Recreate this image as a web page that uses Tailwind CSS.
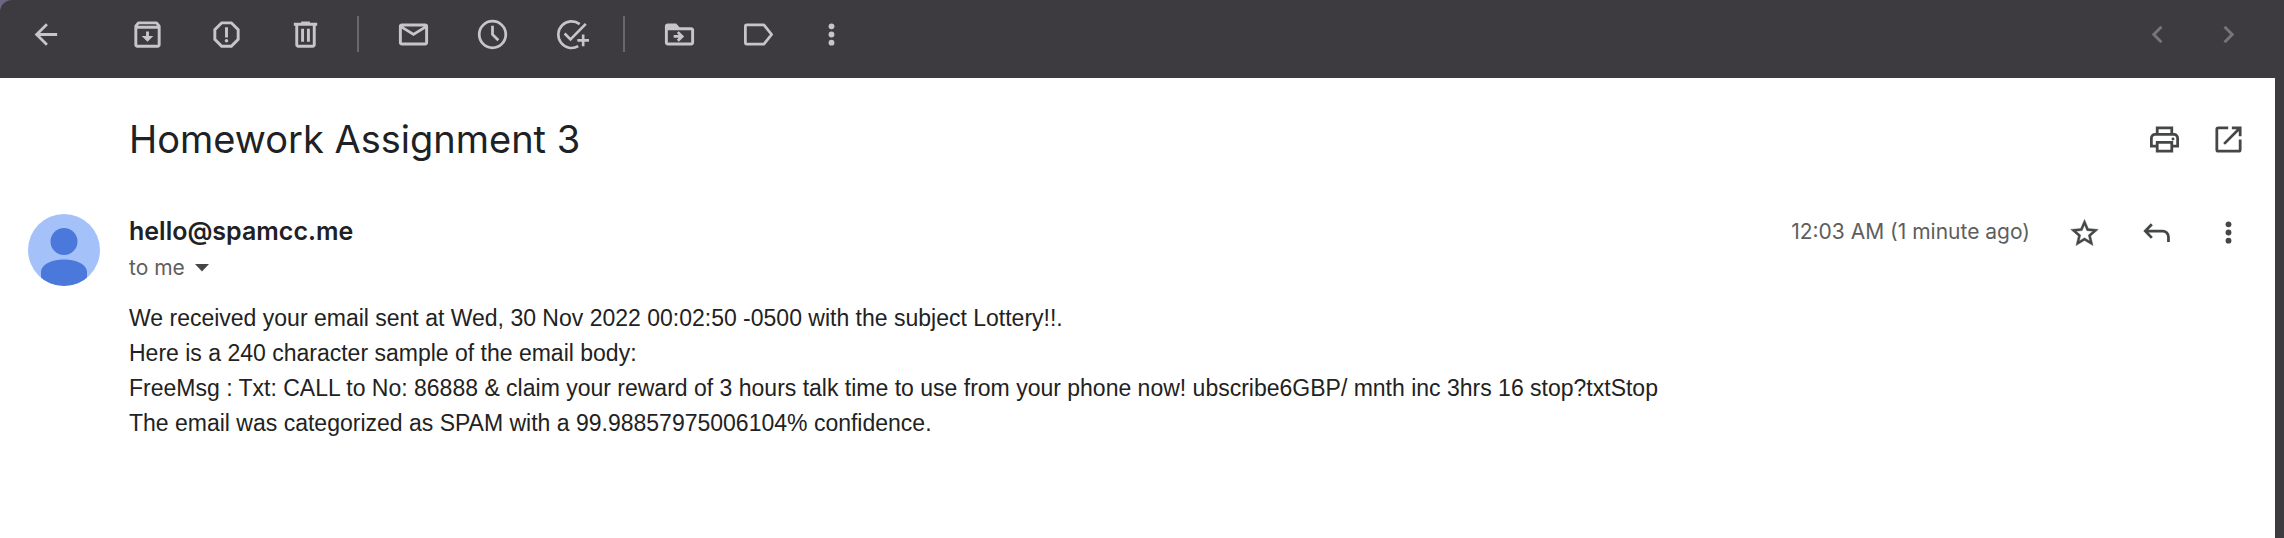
<!DOCTYPE html>
<html lang="en">
<head>
<meta charset="utf-8">
<title>Homework Assignment 3</title>
<script src="https://cdn.jsdelivr.net/npm/@tailwindcss/browser@4"></script>
</head>
<body class="bg-[#6a6784]">
<div class="flex min-h-screen flex-col rounded-tl-xl bg-[#3d3b40] font-['Inter',sans-serif]">
  <header class="flex h-[78px] items-start justify-between pt-[10px] pr-8 pl-[22px] text-[#c6c5c7]">
    <div class="flex items-center">
      <button aria-label="Back" class="mr-[53px] grid size-12 place-items-center"><svg class="size-[35px]" viewBox="0 0 24 24" fill="none" stroke="currentColor" stroke-width="1.9"><path d="M19.3 12H6M12.300 4.900 5.200 12l7.100 7.100"/></svg></button>
      <div class="flex gap-[31px]">
        <button aria-label="Archive" class="grid size-12 place-items-center"><svg class="size-[35px]" viewBox="0 0 24 24" fill="currentColor"><path d="M20.54 5.23l-1.39-1.68C18.88 3.21 18.47 3 18 3H6c-.47 0-.88.21-1.16.55L3.46 5.23C3.17 5.57 3 6.02 3 6.5V19c0 1.1.9 2 2 2h14c1.1 0 2-.9 2-2V6.500c0-.48-.17-.93-.46-1.27zM6.240 5h11.520l.83 1H5.420l.82-1zM5 19V8h14v11H5zm8-9h-2v3H8l4 4 4-4h-3z"/></svg></button>
        <button aria-label="Report spam" class="grid size-12 place-items-center"><svg class="size-[35px]" viewBox="0 0 24 24" fill="currentColor"><path d="M15.730 3H8.270L3 8.270v7.460L8.270 21h7.460L21 15.730V8.270L15.730 3zM19 14.900L14.900 19H9.100L5 14.900V9.100L9.100 5h5.800L19 9.100v5.800zM11 7h2v7h-2z"/><circle cx="12" cy="16.300" r="1.200"/></svg></button>
        <button aria-label="Delete" class="grid size-12 place-items-center"><svg class="size-[35px]" viewBox="0 0 24 24" fill="currentColor"><path d="M15 4V3H9v1H4v2h1v13c0 1.100.9 2 2 2h10c1.100 0 2-.9 2-2V6h1V4h-5zm2 15H7V6h10v13zM9 8h2v9H9zm4 0h2v9h-2z"/></svg></button>
      </div>
      <div class="mr-[30px] ml-7 h-9 w-[2px] bg-[#69676c]"></div>
      <div class="flex gap-[31px]">
        <button aria-label="Mark as unread" class="grid size-12 place-items-center"><svg class="size-[35px]" viewBox="0 0 24 24" fill="currentColor"><path d="M20 4.500H4c-1.100 0-2 .7-2 1.800v11.400c0 1.100.9 1.800 2 1.800h16c1.100 0 2-.7 2-1.800V6.300c0-1.100-.9-1.800-2-1.800zM19 6.500l-7 4.300-7-4.300h14zM4 17.500V8l8 5 8-5v9.500H4z"/></svg></button>
        <button aria-label="Snooze" class="grid size-12 place-items-center"><svg class="size-[35px]" viewBox="0 0 24 24" fill="none" stroke="currentColor" stroke-width="1.900"><circle cx="12" cy="12" r="9.100"/><path d="M12 6v6l4 3.900"/></svg></button>
        <button aria-label="Add to tasks" class="grid size-12 place-items-center"><svg class="size-[35px] overflow-visible" viewBox="0 0 24 24" fill="none" stroke="currentColor" stroke-width="1.800"><path d="M17.600 4.900A9.100 9.100 0 1 0 16.600 20M7.300 11.300l4 4L21.800 4.700M20 12v8M16 16h8"/></svg></button>
      </div>
      <div class="mr-[30px] ml-7 h-9 w-[2px] bg-[#69676c]"></div>
      <div class="flex gap-[31px]">
        <button aria-label="Move to" class="grid size-12 place-items-center"><svg class="size-[35px]" viewBox="0 0 24 24" fill="currentColor"><path d="M20 7h-8l-2.300-2.500H4c-1.100 0-2 .7-2 1.800v11.400c0 1.100.9 1.800 2 1.800h16c1.100 0 2-.7 2-1.800V8.800C22 7.700 21.100 7 20 7zm0 10.500H4V9h16v8.500z"/><path d="M8 12.300h3.400L10.200 11l1.300-1.300 3.700 3.600-3.700 3.600-1.300-1.300 1.200-1.300H8z"/></svg></button>
        <button aria-label="Labels" class="grid size-12 place-items-center"><svg class="size-[35px]" viewBox="0 0 24 24" fill="none" stroke="currentColor" stroke-width="1.900" stroke-linejoin="round"><path d="M4 5.450h11.700L21 12l-5.300 6.550H4a1 1 0 0 1-1-1V6.450a1 1 0 0 1 1-1z"/></svg></button>
      </div>
      <button aria-label="More" class="ml-[25px] grid size-12 place-items-center"><svg class="size-[35px]" viewBox="0 0 24 24" fill="currentColor"><circle cx="12" cy="6.400" r="2"/><circle cx="12" cy="12" r="2"/><circle cx="12" cy="17.600" r="2"/></svg></button>
    </div>
    <nav aria-label="Messages" class="flex gap-[23px] text-[#777579]">
      <button aria-label="Newer" class="grid size-12 place-items-center"><svg class="size-[35px]" viewBox="0 0 24 24" fill="currentColor"><path d="M15.410 7.410 14 6l-6 6 6 6 1.410-1.410L10.830 12z"/></svg></button>
      <button aria-label="Older" class="grid size-12 place-items-center"><svg class="size-[35px]" viewBox="0 0 24 24" fill="currentColor"><path d="M8.590 16.590 10 18l6-6-6-6-1.410 1.410L13.170 12z"/></svg></button>
    </nav>
  </header>

  <main class="mr-[9px] flex-1 bg-white pt-[29px] pr-[23px] pl-7 text-[#202124]">
    <div class="flex h-16 items-center justify-between pl-[101px]">
      <h1 class="text-[38px]">Homework Assignment 3</h1>
      <div class="flex gap-4 text-[#444746]">
        <button aria-label="Print" class="grid size-12 place-items-center"><svg class="size-[35px]" viewBox="0 0 24 24" fill="none" stroke="currentColor" stroke-width="1.900"><path d="M7 8.500V4h10v4.500M7 16.500H3V11a2.500 2.500 0 0 1 2.500-2.500h13A2.500 2.500 0 0 1 21 11v5.500h-4M7 13.900h10V20H7z"/><circle cx="17.800" cy="11.600" r="1" fill="currentColor" stroke="none"/></svg></button>
        <button aria-label="Open in new window" class="grid size-12 place-items-center"><svg class="size-[35px]" viewBox="0 0 24 24" fill="none" stroke="currentColor" stroke-width="1.900"><path d="M11.800 4H5a1 1 0 0 0-1 1v14a1 1 0 0 0 1 1h14a1 1 0 0 0 1-1v-7M14.300 4H20v5.700M19.500 4.500 9 15"/></svg></button>
      </div>
    </div>

    <article class="mt-[43px] flex gap-[29px]">
      <svg class="size-[72px] shrink-0" viewBox="0 0 72 72" role="img" aria-label="Sender picture"><defs><clipPath id="disc"><circle cx="36" cy="36" r="36"/></clipPath></defs><g clip-path="url(#disc)"><path fill="#a4c2f9" d="M0 0h72v72H0z"/><circle cx="36" cy="27.500" r="13.500" fill="#4b78db"/><path fill="#4b78db" d="M13 72V58c0-8 12-12.500 23-12.500S59 50 59 58v14z"/></g></svg>
      <div class="min-w-0 flex-1">
        <div class="flex items-start justify-between">
          <div>
            <h2 class="text-[25px] leading-[35px] font-semibold">hello@spamcc.me</h2>
            <button class="flex h-[37px] items-center gap-[10px] text-[21px] text-[#5e5e5e]">to me<svg class="h-2 w-[14px]" viewBox="0 0 14 8" fill="#444746"><path d="M0 0h14L7 7.500z"/></svg></button>
          </div>
          <div class="flex h-9 items-center gap-6 text-[#444746]">
            <time class="mr-[6px] text-[21px] text-[#5e5e5e]">12:03 AM (1 minute ago)</time>
            <button aria-label="Star" class="grid size-12 place-items-center"><svg class="size-[33px]" viewBox="0 0 24 24" fill="currentColor" stroke="currentColor" stroke-width="0.300"><path d="M22 9.740l-7.190-.62L12 2.500 9.190 9.130 2 9.740l5.460 4.730-1.640 7.030L12 17.770l6.180 3.730-1.630-7.030L22 9.740zM12 15.900l-3.760 2.270 1-4.280-3.320-2.880 4.380-.38L12 6.600l1.710 4.040 4.380.38-3.320 2.880 1 4.280L12 15.900z"/></svg></button>
            <button aria-label="Reply" class="grid size-12 place-items-center"><svg class="size-[35px]" viewBox="0 0 24 24" fill="none" stroke="currentColor" stroke-width="1.900"><path d="M8.800 6.300 4.300 11l4.500 4.700M4.500 11h11.700a4 4 0 0 1 4 4v3.500"/></svg></button>
            <button aria-label="More message options" class="grid size-12 place-items-center"><svg class="size-[35px]" viewBox="0 0 24 24" fill="currentColor"><circle cx="12" cy="6.400" r="2"/><circle cx="12" cy="12" r="2"/><circle cx="12" cy="17.600" r="2"/></svg></button>
          </div>
        </div>
        <div class="mt-[15px] font-['Liberation_Sans',sans-serif] text-[23px] leading-[35px] text-[#222222]">
          <p>We received your email sent at Wed, 30 Nov 2022 00:02:50 -0500 with the subject Lottery!!.</p>
          <p>Here is a 240 character sample of the email body:</p>
          <p>FreeMsg : Txt: CALL to No: 86888 &amp; claim your reward of 3 hours talk time to use from your phone now! ubscribe6GBP/ mnth inc 3hrs 16 stop?txtStop</p>
          <p>The email was categorized as SPAM with a 99.98857975006104% confidence.</p>
        </div>
      </div>
    </article>
  </main>
</div>
</body>
</html>
